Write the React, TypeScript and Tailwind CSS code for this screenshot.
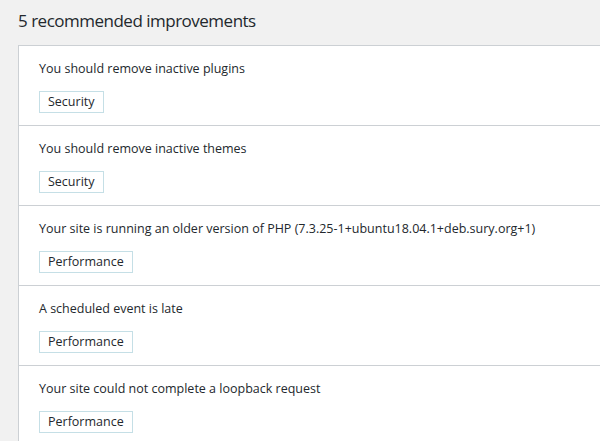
const items = [
  { label: "You should remove inactive plugins", badge: "Security" },
  { label: "You should remove inactive themes", badge: "Security" },
  {
    label:
      "Your site is running an older version of PHP (7.3.25-1+ubuntu18.04.1+deb.sury.org+1)",
    badge: "Performance",
  },
  { label: "A scheduled event is late", badge: "Performance" },
  { label: "Your site could not complete a loopback request", badge: "Performance" },
];

export default function App() {
  return (
    <div
      className="w-[600px] h-[441px] overflow-hidden bg-[#f1f1f1] text-[#23282d]"
      style={{ fontFamily: '"Open Sans", "Noto Sans", sans-serif' }}
    >
      <h3 className="pl-[18px] pt-[8px] h-[45px] text-[17px] tracking-[-0.5px] leading-[26px] font-normal">
        5 recommended improvements
      </h3>
      <div className="ml-[18px] w-[640px] bg-white border border-[#ccd0d4]">
        {items.map((item, i) => (
          <div key={i} className="h-[80px] pl-[20px] pt-[11px] border-b border-[#ccd0d4]">
            <p className="text-[12.5px] leading-[24px]">{item.label}</p>
            <span className="mt-[10px] inline-block h-[22px] px-[8px] border border-[#c5dfe6] text-[12.5px] leading-[20px]">
              {item.badge}
            </span>
          </div>
        ))}
      </div>
    </div>
  );
}
